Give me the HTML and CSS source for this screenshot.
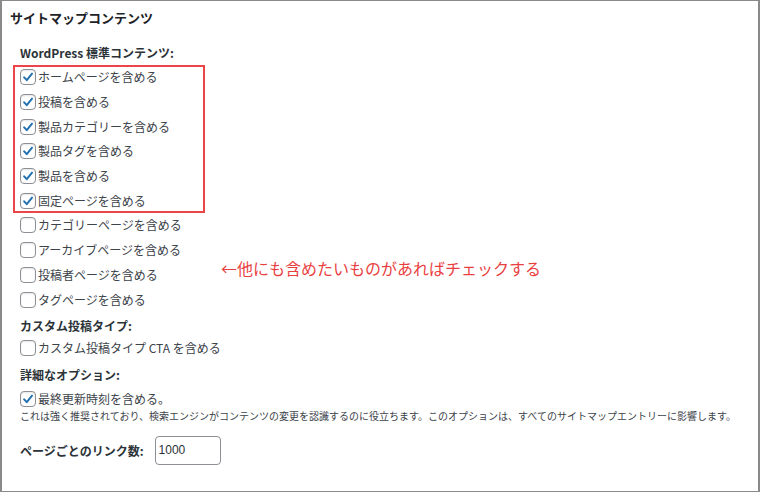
FILE: index.html
```html
<!DOCTYPE html>
<html lang="ja">
<head>
<meta charset="utf-8">
<link rel="stylesheet" href="styles.css">
</head>
<body>
<div class="frame">
  <h2 class="title">サイトマップコンテンツ</h2>
  <div class="body">
    <div class="group-label first">WordPress 標準コンテンツ:</div>
    <div class="hl">
      <label class="row"><span class="cb on"><svg viewBox="0 0 16 16"><path d="M3.6 8.4 L6.6 11.6 L12.6 4.2"/></svg></span>ホームページを含める</label>
      <label class="row"><span class="cb on"><svg viewBox="0 0 16 16"><path d="M3.6 8.4 L6.6 11.6 L12.6 4.2"/></svg></span>投稿を含める</label>
      <label class="row"><span class="cb on"><svg viewBox="0 0 16 16"><path d="M3.6 8.4 L6.6 11.6 L12.6 4.2"/></svg></span>製品カテゴリーを含める</label>
      <label class="row"><span class="cb on"><svg viewBox="0 0 16 16"><path d="M3.6 8.4 L6.6 11.6 L12.6 4.2"/></svg></span>製品タグを含める</label>
      <label class="row"><span class="cb on"><svg viewBox="0 0 16 16"><path d="M3.6 8.4 L6.6 11.6 L12.6 4.2"/></svg></span>製品を含める</label>
      <label class="row"><span class="cb on"><svg viewBox="0 0 16 16"><path d="M3.6 8.4 L6.6 11.6 L12.6 4.2"/></svg></span>固定ページを含める</label>
    </div>
    <label class="row"><span class="cb"></span>カテゴリーページを含める</label>
    <label class="row"><span class="cb"></span>アーカイブページを含める</label>
    <label class="row"><span class="cb"></span>投稿者ページを含める</label>
    <label class="row"><span class="cb"></span>タグページを含める</label>

    <div class="group-label">カスタム投稿タイプ:</div>
    <label class="row"><span class="cb"></span>カスタム投稿タイプ CTA を含める</label>

    <div class="group-label">詳細なオプション:</div>
    <label class="row short"><span class="cb on"><svg viewBox="0 0 16 16"><path d="M3.6 8.4 L6.6 11.6 L12.6 4.2"/></svg></span>最終更新時刻を含める。</label>
    <p class="desc">これは強く推奨されており、検索エンジンがコンテンツの変更を認識するのに役立ちます。このオプションは、すべてのサイトマップエントリーに影響します。</p>

    <div class="links">
      <span class="links-label">ページごとのリンク数:</span>
      <input class="num" type="text" value="1000">
    </div>
  </div>
  <div class="note">←他にも含めたいものがあればチェックする</div>
</div>
</body>
</html>
```

FILE: styles.css
```css
html, body {
  margin: 0;
  padding: 0;
  background: #fff;
}
body {
  font-family: "Noto Sans CJK JP", "Noto Sans", sans-serif;
  color: #3c434a;
  font-size: 12px;
}
.frame {
  position: relative;
  width: 760px;
  height: 492px;
  box-sizing: border-box;
  border: 2px solid #8a8a8a;
  border-top-width: 1px;
  border-bottom-width: 1px;
  padding: 7px 0 0 8px;
}
.title {
  margin: 0;
  font-size: 13px;
  line-height: 20px;
  font-weight: 700;
  color: #1d2327;
}
.body {
  padding-left: 10px;
}
.group-label {
  font-weight: 600;
  line-height: 20px;
  color: #2c3338;
  margin-top: 4px;
}
.group-label.first {
  margin-top: 15px;
  margin-bottom: 2px;
}
.hl {
  width: 185px;
  margin-left: -7px;
  padding-left: 7px;
  outline: 2px solid #ec4449;
  outline-offset: -2px;
}
.row {
  display: flex;
  align-items: center;
  height: 24.7px;
  line-height: 20px;
  white-space: nowrap;
}
.row.short {
  height: 22px;
  margin-top: 3px;
}
.cb {
  width: 16px;
  height: 16px;
  box-sizing: border-box;
  border: 1px solid #8c8f94;
  border-radius: 4px;
  background: #fff;
  box-shadow: inset 0 1px 2px rgba(0,0,0,0.1);
  margin-right: 2px;
  flex: none;
  display: flex;
  align-items: center;
  justify-content: center;
}
.cb svg {
  width: 14px;
  height: 14px;
}
.cb svg path {
  fill: none;
  stroke: #2271b1;
  stroke-width: 2.3;
  stroke-linecap: round;
  stroke-linejoin: round;
}
.desc {
  margin: -1px 0 0;
  font-size: 10px;
  line-height: 14px;
  white-space: nowrap;
  color: #3c434a;
}
.links {
  display: flex;
  align-items: center;
  margin-top: 13px;
  height: 29px;
}
.links-label {
  font-weight: 600;
  color: #2c3338;
  margin-right: 11px;
}
.num {
  width: 66px;
  height: 29px;
  box-sizing: border-box;
  border: 1px solid #8c8f94;
  border-radius: 4px;
  padding: 0 3px;
  font-family: "Liberation Sans", Arial, sans-serif;
  font-size: 12px;
  color: #2c3338;
  background: #fff;
  outline: none;
}
.note {
  position: absolute;
  left: 219px;
  top: 256px;
  font-size: 16px;
  line-height: 22px;
  color: #ea3f3f;
  white-space: nowrap;
}
```
